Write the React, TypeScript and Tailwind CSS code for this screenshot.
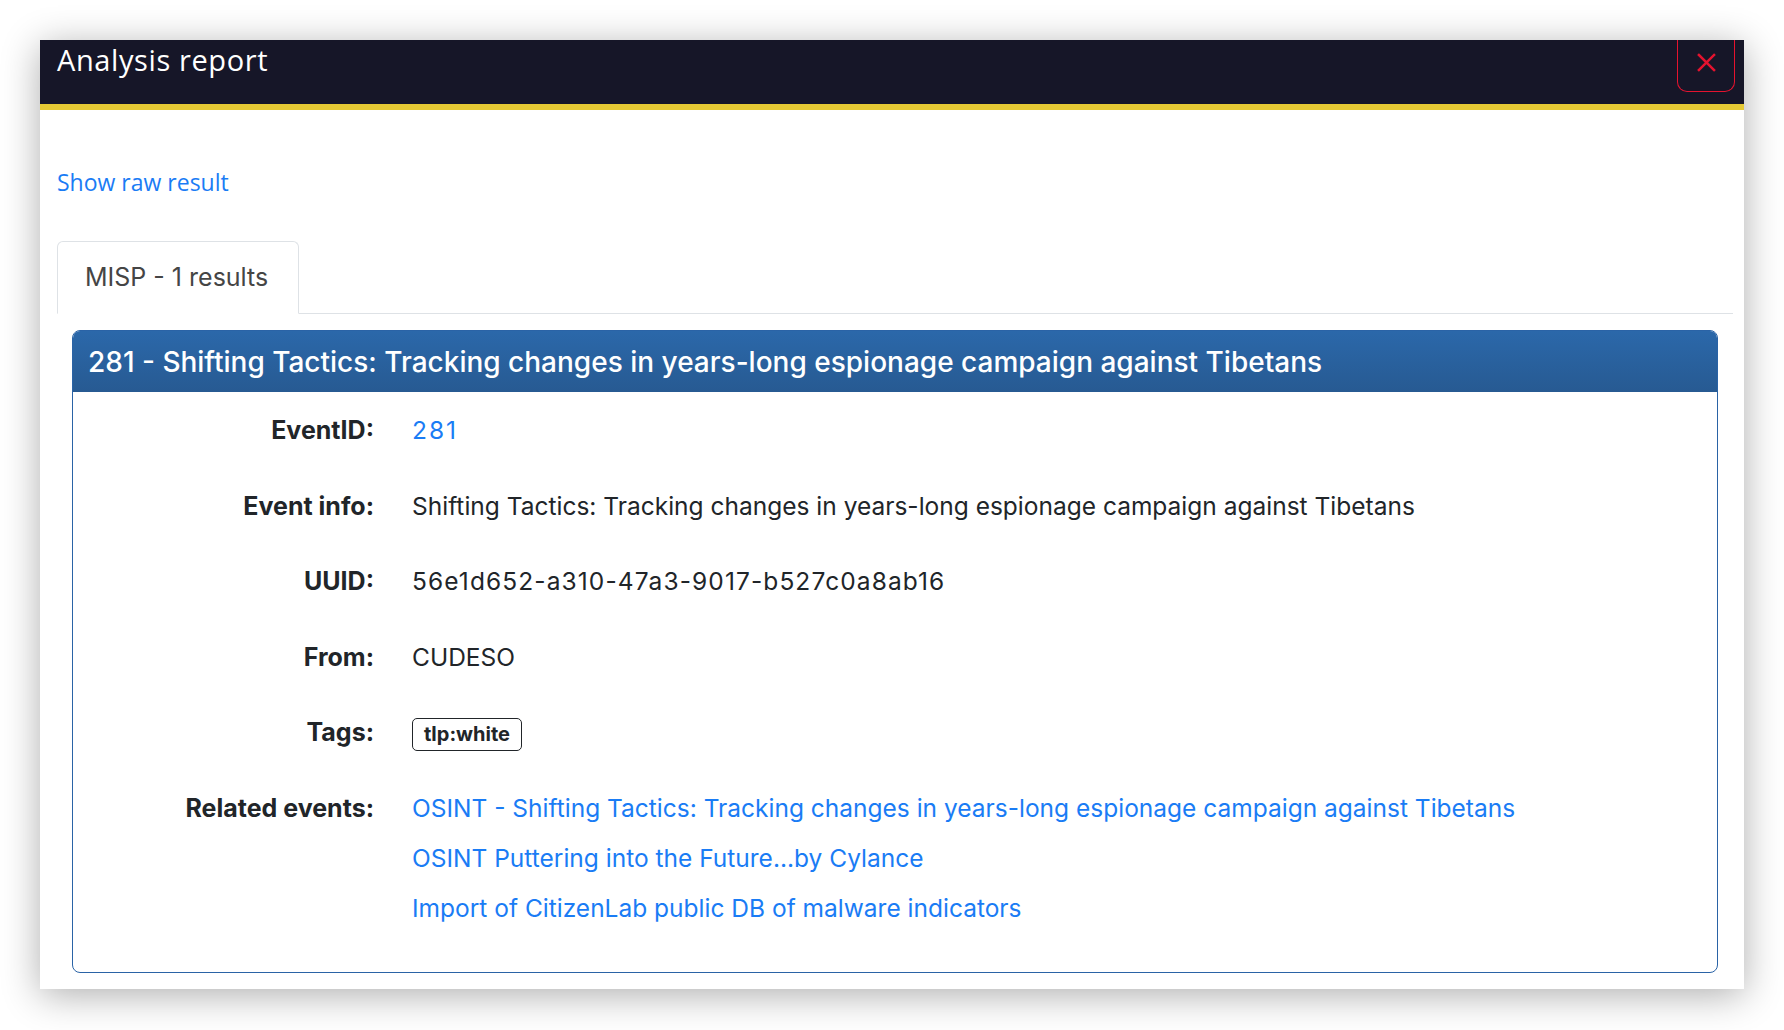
import React from 'react';

const RELATED = [
  'OSINT - Shifting Tactics: Tracking changes in years-long espionage campaign against Tibetans',
  'OSINT Puttering into the Future...by Cylance',
  'Import of CitizenLab public DB of malware indicators',
];

function Row({ label, children }: { label: string; children: React.ReactNode }) {
  return (
    <div className="flex mb-[37.5px] last:mb-0">
      <div className="w-[301px] shrink-0 text-right font-bold text-[#212529] text-[25px] leading-[38px]">{label}</div>
      <div className="pl-[38px] leading-[38px] text-[#212529]">{children}</div>
    </div>
  );
}

export default function App() {
  return (
    <div className="w-[1784px] h-[1030px] bg-white p-[40px] font-['Inter',sans-serif]">
      <div className="w-[1704px] h-[949px] bg-white shadow-[0_6px_36px_rgba(0,0,0,0.32)] flex flex-col">
        {/* header */}
        <div className="h-[70px] bg-[#161628] border-b-[6px] border-[#e5c935] flex justify-between pl-[17px] pr-[9px] shrink-0">
          <h1 className="font-['Open_Sans',sans-serif] text-white text-[29px] tracking-[0.6px] leading-[40px]">Analysis report</h1>
          <button className="w-[58px] h-[52px] border border-t-0 border-[#e5132f] rounded-b-[10px] flex items-start justify-center pt-[13px]">
            <svg width="19" height="19" viewBox="0 0 20 20" fill="none" stroke="#e5132f" strokeWidth="2.6" strokeLinecap="square">
              <path d="M2 2 L18 18 M18 2 L2 18" />
            </svg>
          </button>
        </div>

        {/* body */}
        <div className="flex-1 pl-[17px] pr-[11px] pt-[58px]">
          <a className="font-['Open_Sans',sans-serif] text-[#1a7cf5] text-[23px] leading-[28px] block">Show raw result</a>

          <div className="mt-[45px] flex border-b border-[#dee2e6]">
            <div className="w-[242px] h-[73px] -mb-px border border-[#dee2e6] border-b-white rounded-t-[6px] bg-white flex items-center pl-[27px] text-[25px] text-[#454545]">
              MISP - 1 results
            </div>
          </div>

          <div className="mx-[15px] mt-[16px] border border-[#2a63a6] rounded-[8px] overflow-hidden">
            <div className="h-[61px] bg-gradient-to-b from-[#2b68aa] to-[#275a92] flex items-center pl-[15px] text-white text-[28px] font-medium">
              281 - Shifting Tactics: Tracking changes in years-long espionage campaign against Tibetans
            </div>
            <div className="pt-[19px] pb-[45px] text-[24.5px]">
              <Row label="EventID:">
                <a className="text-[#1a7cf5] tracking-[2px]">281</a>
              </Row>
              <Row label="Event info:">
                Shifting Tactics: Tracking changes in years-long espionage campaign against Tibetans
              </Row>
              <Row label="UUID:">
                <span className="tracking-[1.1px]">56e1d652-a310-47a3-9017-b527c0a8ab16</span>
              </Row>
              <Row label="From:">CUDESO</Row>
              <Row label="Tags:">
                <span className="inline-flex items-center h-[33px] px-[11px] border border-[#212529] rounded-[5px] text-[20px] font-bold leading-none align-middle">
                  tlp:white
                </span>
              </Row>
              <Row label="Related events:">
                <div className="flex flex-col gap-[12px]">
                  {RELATED.map(r => (
                    <a key={r} className="text-[#1a7cf5]">{r}</a>
                  ))}
                </div>
              </Row>
            </div>
          </div>
        </div>
      </div>
    </div>
  );
}
